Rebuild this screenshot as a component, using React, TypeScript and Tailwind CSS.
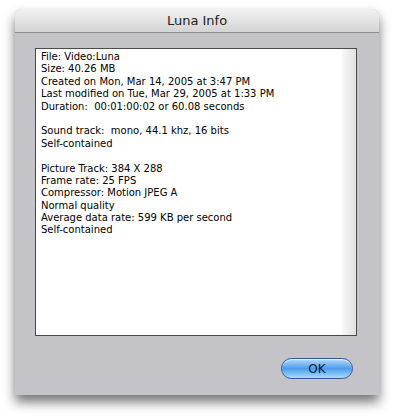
const lines = [
  "File: Video:Luna",
  "Size: 40.26 MB",
  "Created on Mon, Mar 14, 2005 at 3:47 PM",
  "Last modified on Tue, Mar 29, 2005 at 1:33 PM",
  "Duration:  00:01:00:02 or 60.08 seconds",
  "",
  "Sound track:  mono, 44.1 khz, 16 bits",
  "Self-contained",
  "",
  "Picture Track: 384 X 288",
  "Frame rate: 25 FPS",
  "Compressor: Motion JPEG A",
  "Normal quality",
  "Average data rate: 599 KB per second",
  "Self-contained",
];

export default function App() {
  return (
    <div className="w-[400px] h-[420px] bg-white pl-[15px] pt-[9px]">
      <div className="w-[364px] h-[386px] flex flex-col rounded-t-[6px] bg-[#c4c4c8] shadow-[0_7px_12px_rgba(0,0,0,0.55)]">
        {/* Title bar */}
        <div
          className="h-[24px] flex items-center justify-center rounded-t-[6px] bg-gradient-to-b from-[#f2f2f2] to-[#d4d4d4] border-b border-[#8e8e8e] text-[13px] text-[#222]"
          style={{ fontFamily: '"DejaVu Sans", sans-serif' }}
        >
          Luna Info
        </div>

        {/* Body */}
        <div className="flex flex-col pl-[20px] pt-[15px]">
          <div className="w-[322px] h-[288px] flex border border-[#4a4a4a] bg-white">
            <div
              className="flex-1 pl-[5px] pt-[2px] text-[10px] leading-[12.4px] text-black whitespace-pre"
              style={{ fontFamily: '"DejaVu Sans", sans-serif' }}
            >
              {lines.map((l, i) => (
                <div key={i} className="h-[12.4px]">
                  {l}
                </div>
              ))}
            </div>
            <div className="w-[14px] bg-gradient-to-r from-[#f8f8f8] to-[#e2e2e2]" />
          </div>

          <div className="flex justify-end pr-[26px] mt-[22px]">
            <button
              className="w-[72px] h-[21px] rounded-full border border-[#34569a] bg-gradient-to-b from-[#b4dafc] via-[#4c9cec] to-[#a9dcff] text-[12px] font-medium text-[#0d1a2e] shadow-[inset_0_1px_1px_rgba(255,255,255,0.7)]"
              style={{ fontFamily: '"DejaVu Sans", sans-serif' }}
            >
              OK
            </button>
          </div>
        </div>
      </div>
    </div>
  );
}
